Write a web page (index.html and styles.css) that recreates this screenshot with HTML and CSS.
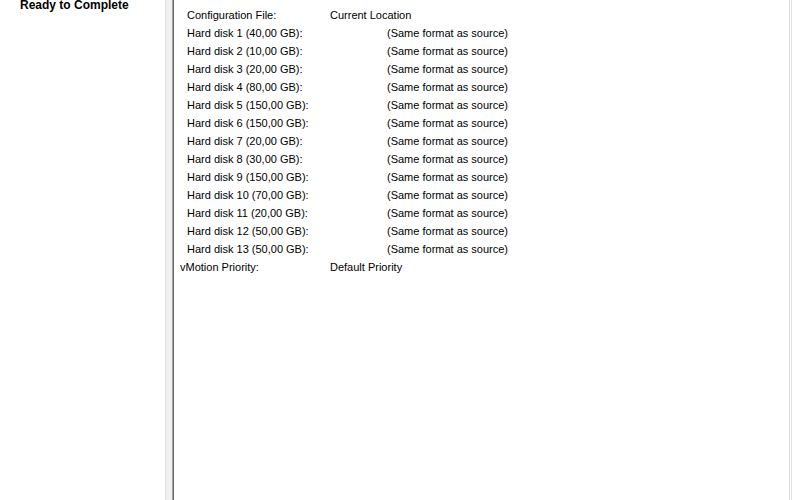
FILE: index.html
```html
<!DOCTYPE html>
<html>
<head>
<meta charset="utf-8">
<link rel="stylesheet" href="styles.css">
</head>
<body>
<div class="window">
  <aside class="steps">
    <div class="step-current">Ready to Complete</div>
  </aside>
  <div class="divider"></div>
  <main class="content">
    <div class="summary">
      <div class="label sub">Configuration File:</div><div class="value">Current Location</div>
      <div class="label sub">Hard disk 1 (40,00 GB):</div><div class="value fmt">(Same format as source)</div>
      <div class="label sub">Hard disk 2 (10,00 GB):</div><div class="value fmt">(Same format as source)</div>
      <div class="label sub">Hard disk 3 (20,00 GB):</div><div class="value fmt">(Same format as source)</div>
      <div class="label sub">Hard disk 4 (80,00 GB):</div><div class="value fmt">(Same format as source)</div>
      <div class="label sub">Hard disk 5 (150,00 GB):</div><div class="value fmt">(Same format as source)</div>
      <div class="label sub">Hard disk 6 (150,00 GB):</div><div class="value fmt">(Same format as source)</div>
      <div class="label sub">Hard disk 7 (20,00 GB):</div><div class="value fmt">(Same format as source)</div>
      <div class="label sub">Hard disk 8 (30,00 GB):</div><div class="value fmt">(Same format as source)</div>
      <div class="label sub">Hard disk 9 (150,00 GB):</div><div class="value fmt">(Same format as source)</div>
      <div class="label sub">Hard disk 10 (70,00 GB):</div><div class="value fmt">(Same format as source)</div>
      <div class="label sub">Hard disk 11 (20,00 GB):</div><div class="value fmt">(Same format as source)</div>
      <div class="label sub">Hard disk 12 (50,00 GB):</div><div class="value fmt">(Same format as source)</div>
      <div class="label sub">Hard disk 13 (50,00 GB):</div><div class="value fmt">(Same format as source)</div>
      <div class="label">vMotion Priority:</div><div class="value">Default Priority</div>
    </div>
  </main>
  <div class="right-edge"></div>
</div>
</body>
</html>
```
FILE: styles.css
```css
html, body {
  margin: 0;
  padding: 0;
  background: #ffffff;
}
body {
  font-family: "Liberation Sans", Arial, sans-serif;
  font-size: 11px;
  color: #000000;
}
.window {
  display: flex;
  width: 792px;
  height: 500px;
  overflow: hidden;
}
.steps {
  width: 165px;
  flex: none;
  background: #ffffff;
}
.step-current {
  font-weight: bold;
  font-size: 12px;
  line-height: 14px;
  margin-top: -2px;
  padding-left: 20px;
}
.divider {
  flex: none;
  width: 6px;
  border-left: 1px solid #e3e3e3;
  border-right: 1px solid #a0a0a0;
  background: #f0f0f0;
}
.content {
  flex: 1;
  border-left: 1px solid #696969;
  padding-top: 6px;
  padding-left: 6px;
}
.summary {
  display: grid;
  grid-template-columns: 150px auto;
  justify-content: start;
  line-height: 18px;
  white-space: nowrap;
}
.label.sub {
  padding-left: 7px;
}
.value.fmt {
  padding-left: 57px;
}
.right-edge {
  flex: none;
  width: 1px;
  border-left: 1px solid #dcdcdc;
  border-right: 1px solid #e3e3e3;
  background: #ffffff;
}
```
